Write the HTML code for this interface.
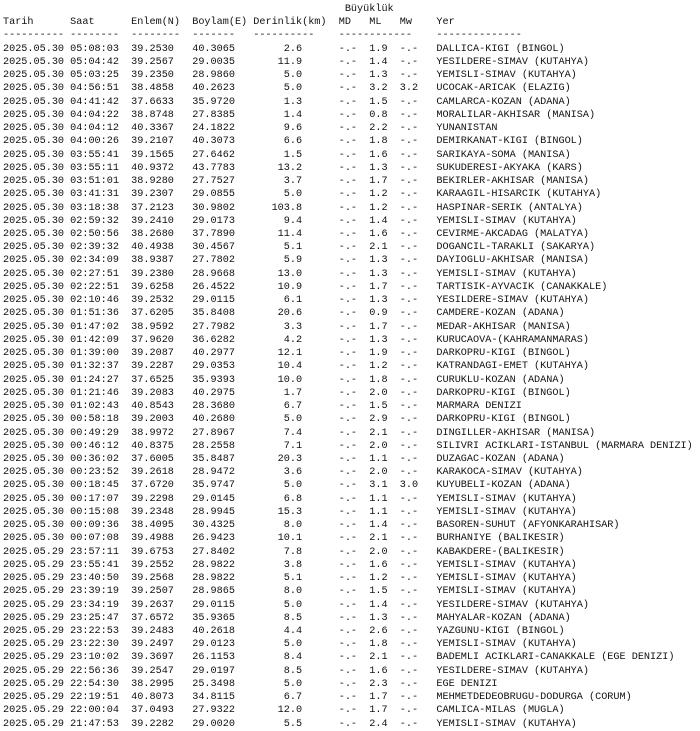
<!DOCTYPE html>
<html><head><meta charset="utf-8"><style>
html,body{margin:0;padding:0;background:#fff;width:700px;height:729px;overflow:hidden}
pre{margin:0;position:absolute;left:3px;top:3px;font-family:"Liberation Mono",monospace;font-size:10.18px;line-height:13.24px;color:#111;white-space:pre}
</style></head><body><pre>                                                        Büyüklük
Tarih      Saat      Enlem(N)  Boylam(E) Derinlik(km)  MD   ML   Mw    Yer
---------- --------  --------  -------   ----------    ------------    --------------
2025.05.30 05:08:03  39.2530   40.3065        2.6      -.-  1.9  -.-   DALLICA-KIGI (BINGOL)
2025.05.30 05:04:42  39.2567   29.0035       11.9      -.-  1.4  -.-   YESILDERE-SIMAV (KUTAHYA)
2025.05.30 05:03:25  39.2350   28.9860        5.0      -.-  1.3  -.-   YEMISLI-SIMAV (KUTAHYA)
2025.05.30 04:56:51  38.4858   40.2623        5.0      -.-  3.2  3.2   UCOCAK-ARICAK (ELAZIG)
2025.05.30 04:41:42  37.6633   35.9720        1.3      -.-  1.5  -.-   CAMLARCA-KOZAN (ADANA)
2025.05.30 04:04:22  38.8748   27.8385        1.4      -.-  0.8  -.-   MORALILAR-AKHISAR (MANISA)
2025.05.30 04:04:12  40.3367   24.1822        9.6      -.-  2.2  -.-   YUNANISTAN
2025.05.30 04:00:26  39.2107   40.3073        6.6      -.-  1.8  -.-   DEMIRKANAT-KIGI (BINGOL)
2025.05.30 03:55:41  39.1565   27.6462        1.5      -.-  1.6  -.-   SARIKAYA-SOMA (MANISA)
2025.05.30 03:55:11  40.9372   43.7783       13.2      -.-  1.3  -.-   SUKUDERESI-AKYAKA (KARS)
2025.05.30 03:51:01  38.9280   27.7527        3.7      -.-  1.7  -.-   BEKIRLER-AKHISAR (MANISA)
2025.05.30 03:41:31  39.2307   29.0855        5.0      -.-  1.2  -.-   KARAAGIL-HISARCIK (KUTAHYA)
2025.05.30 03:18:38  37.2123   30.9802      103.8      -.-  1.2  -.-   HASPINAR-SERIK (ANTALYA)
2025.05.30 02:59:32  39.2410   29.0173        9.4      -.-  1.4  -.-   YEMISLI-SIMAV (KUTAHYA)
2025.05.30 02:50:56  38.2680   37.7890       11.4      -.-  1.6  -.-   CEVIRME-AKCADAG (MALATYA)
2025.05.30 02:39:32  40.4938   30.4567        5.1      -.-  2.1  -.-   DOGANCIL-TARAKLI (SAKARYA)
2025.05.30 02:34:09  38.9387   27.7802        5.9      -.-  1.3  -.-   DAYIOGLU-AKHISAR (MANISA)
2025.05.30 02:27:51  39.2380   28.9668       13.0      -.-  1.3  -.-   YEMISLI-SIMAV (KUTAHYA)
2025.05.30 02:22:51  39.6258   26.4522       10.9      -.-  1.7  -.-   TARTISIK-AYVACIK (CANAKKALE)
2025.05.30 02:10:46  39.2532   29.0115        6.1      -.-  1.3  -.-   YESILDERE-SIMAV (KUTAHYA)
2025.05.30 01:51:36  37.6205   35.8408       20.6      -.-  0.9  -.-   CAMDERE-KOZAN (ADANA)
2025.05.30 01:47:02  38.9592   27.7982        3.3      -.-  1.7  -.-   MEDAR-AKHISAR (MANISA)
2025.05.30 01:42:09  37.9620   36.6282        4.2      -.-  1.3  -.-   KURUCAOVA-(KAHRAMANMARAS)
2025.05.30 01:39:00  39.2087   40.2977       12.1      -.-  1.9  -.-   DARKOPRU-KIGI (BINGOL)
2025.05.30 01:32:37  39.2287   29.0353       10.4      -.-  1.2  -.-   KATRANDAGI-EMET (KUTAHYA)
2025.05.30 01:24:27  37.6525   35.9393       10.0      -.-  1.8  -.-   CURUKLU-KOZAN (ADANA)
2025.05.30 01:21:46  39.2083   40.2975        1.7      -.-  2.0  -.-   DARKOPRU-KIGI (BINGOL)
2025.05.30 01:02:43  40.8543   28.3680        6.7      -.-  1.5  -.-   MARMARA DENIZI
2025.05.30 00:58:18  39.2003   40.2680        5.0      -.-  2.9  -.-   DARKOPRU-KIGI (BINGOL)
2025.05.30 00:49:29  38.9972   27.8967        7.4      -.-  2.1  -.-   DINGILLER-AKHISAR (MANISA)
2025.05.30 00:46:12  40.8375   28.2558        7.1      -.-  2.0  -.-   SILIVRI ACIKLARI-ISTANBUL (MARMARA DENIZI)
2025.05.30 00:36:02  37.6005   35.8487       20.3      -.-  1.1  -.-   DUZAGAC-KOZAN (ADANA)
2025.05.30 00:23:52  39.2618   28.9472        3.6      -.-  2.0  -.-   KARAKOCA-SIMAV (KUTAHYA)
2025.05.30 00:18:45  37.6720   35.9747        5.0      -.-  3.1  3.0   KUYUBELI-KOZAN (ADANA)
2025.05.30 00:17:07  39.2298   29.0145        6.8      -.-  1.1  -.-   YEMISLI-SIMAV (KUTAHYA)
2025.05.30 00:15:08  39.2348   28.9945       15.3      -.-  1.1  -.-   YEMISLI-SIMAV (KUTAHYA)
2025.05.30 00:09:36  38.4095   30.4325        8.0      -.-  1.4  -.-   BASOREN-SUHUT (AFYONKARAHISAR)
2025.05.30 00:07:08  39.4988   26.9423       10.1      -.-  2.1  -.-   BURHANIYE (BALIKESIR)
2025.05.29 23:57:11  39.6753   27.8402        7.8      -.-  2.0  -.-   KABAKDERE-(BALIKESIR)
2025.05.29 23:55:41  39.2552   28.9822        3.8      -.-  1.6  -.-   YEMISLI-SIMAV (KUTAHYA)
2025.05.29 23:40:50  39.2568   28.9822        5.1      -.-  1.2  -.-   YEMISLI-SIMAV (KUTAHYA)
2025.05.29 23:39:19  39.2507   28.9865        8.0      -.-  1.5  -.-   YEMISLI-SIMAV (KUTAHYA)
2025.05.29 23:34:19  39.2637   29.0115        5.0      -.-  1.4  -.-   YESILDERE-SIMAV (KUTAHYA)
2025.05.29 23:25:47  37.6572   35.9365        8.5      -.-  1.3  -.-   MAHYALAR-KOZAN (ADANA)
2025.05.29 23:22:53  39.2483   40.2618        4.4      -.-  2.6  -.-   YAZGUNU-KIGI (BINGOL)
2025.05.29 23:22:30  39.2497   29.0123        5.0      -.-  1.8  -.-   YEMISLI-SIMAV (KUTAHYA)
2025.05.29 23:10:02  39.3697   26.1153        8.4      -.-  2.1  -.-   BADEMLI ACIKLARI-CANAKKALE (EGE DENIZI)
2025.05.29 22:56:36  39.2547   29.0197        8.5      -.-  1.6  -.-   YESILDERE-SIMAV (KUTAHYA)
2025.05.29 22:54:30  38.2995   25.3498        5.0      -.-  2.3  -.-   EGE DENIZI
2025.05.29 22:19:51  40.8073   34.8115        6.7      -.-  1.7  -.-   MEHMETDEDEOBRUGU-DODURGA (CORUM)
2025.05.29 22:00:04  37.0493   27.9322       12.0      -.-  1.7  -.-   CAMLICA-MILAS (MUGLA)
2025.05.29 21:47:53  39.2282   29.0020        5.5      -.-  2.4  -.-   YEMISLI-SIMAV (KUTAHYA)
</pre></body></html>
